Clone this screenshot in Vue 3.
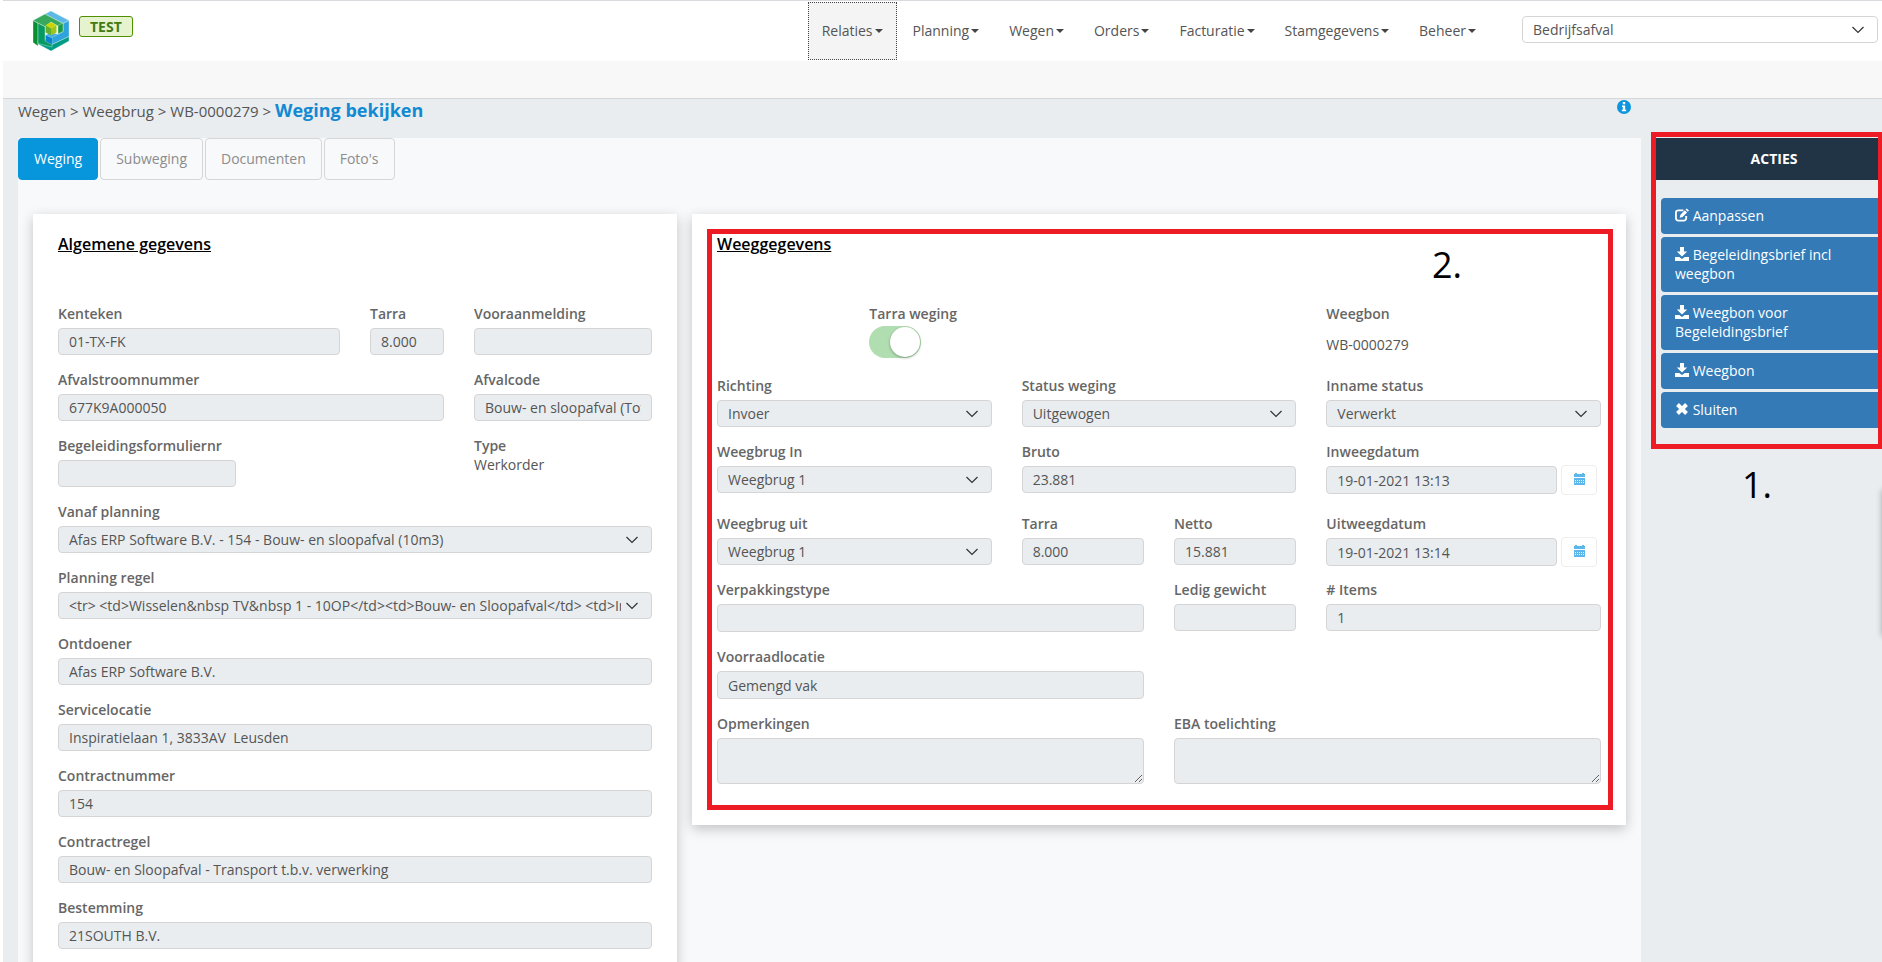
<script setup>
const nav = ['Relaties', 'Planning', 'Wegen', 'Orders', 'Facturatie', 'Stamgegevens', 'Beheer']
const tabs = ['Weging', 'Subweging', 'Documenten', "Foto's"]

const general = [
  [
    { id: 'kenteken', label: 'Kenteken', span: 6, value: '01-TX-FK' },
    { id: 'tarra', label: 'Tarra', span: 2, value: '8.000' },
    { id: 'vooraanmelding', label: 'Vooraanmelding', span: 4, value: '' },
  ],
  [
    { id: 'afvalstroom', label: 'Afvalstroomnummer', span: 8, value: '677K9A000050' },
    { id: 'afvalcode', label: 'Afvalcode', span: 4, value: 'Bouw- en sloopafval (Totaal)' },
  ],
  [
    { id: 'begeleiding', label: 'Begeleidingsformuliernr', span: 4, value: '' },
    { id: 'type', label: 'Type', span: 4, start: 9, kind: 'text', value: 'Werkorder' },
  ],
  [{ id: 'planning', label: 'Vanaf planning', span: 12, kind: 'select', value: 'Afas ERP Software B.V. - 154 - Bouw- en sloopafval (10m3)' }],
  [{ id: 'regel', label: 'Planning regel', span: 12, kind: 'select', value: '<tr> <td>Wisselen&nbsp TV&nbsp 1 - 10OP</td><td>Bouw- en Sloopafval</td> <td>Inzet</td></tr>' }],
  [{ id: 'ontdoener', label: 'Ontdoener', span: 12, value: 'Afas ERP Software B.V.' }],
  [{ id: 'locatie', label: 'Servicelocatie', span: 12, value: 'Inspiratielaan 1, 3833AV  Leusden' }],
  [{ id: 'contract', label: 'Contractnummer', span: 12, value: '154' }],
  [{ id: 'contractregel', label: 'Contractregel', span: 12, value: 'Bouw- en Sloopafval - Transport t.b.v. verwerking' }],
  [{ id: 'bestemming', label: 'Bestemming', span: 12, value: '21SOUTH B.V.' }],
]

const weighing = [
  { size: 'high', fields: [
    { id: 'tarraweging', label: 'Tarra weging', span: 4, start: 3, kind: 'toggle' },
    { id: 'weegbon', label: 'Weegbon', span: 4, start: 9, kind: 'text', low: true, value: 'WB-0000279' },
  ] },
  { size: 'base', fields: [
    { id: 'richting', label: 'Richting', span: 4, kind: 'select', value: 'Invoer' },
    { id: 'status', label: 'Status weging', span: 4, kind: 'select', value: 'Uitgewogen' },
    { id: 'inname', label: 'Inname status', span: 4, kind: 'select', value: 'Verwerkt' },
  ] },
  { size: 'high', fields: [
    { id: 'brugin', label: 'Weegbrug In', span: 4, kind: 'select', value: 'Weegbrug 1' },
    { id: 'bruto', label: 'Bruto', span: 4, value: '23.881' },
    { id: 'indatum', label: 'Inweegdatum', span: 4, kind: 'date', value: '19-01-2021 13:13' },
  ] },
  { size: 'base', fields: [
    { id: 'bruguit', label: 'Weegbrug uit', span: 4, kind: 'select', value: 'Weegbrug 1' },
    { id: 'tarra2', label: 'Tarra', span: 2, value: '8.000' },
    { id: 'netto', label: 'Netto', span: 2, value: '15.881' },
    { id: 'uitdatum', label: 'Uitweegdatum', span: 4, kind: 'date', value: '19-01-2021 13:14' },
  ] },
  { size: 'mid', fields: [
    { id: 'verpakking', label: 'Verpakkingstype', span: 6, tall: true, value: '' },
    { id: 'ledig', label: 'Ledig gewicht', span: 2, value: '' },
    { id: 'items', label: '# Items', span: 4, value: '1' },
  ] },
  { size: 'mid', fields: [
    { id: 'voorraad', label: 'Voorraadlocatie', span: 6, tall: true, value: 'Gemengd vak' },
  ] },
  { size: 'last', fields: [
    { id: 'opmerkingen', label: 'Opmerkingen', span: 6, kind: 'area' },
    { id: 'eba', label: 'EBA toelichting', span: 6, kind: 'area' },
  ] },
]

const cards = [
  { title: 'Algemene gegevens', name: 'general', rows: general.map((fields) => ({ size: 'base', fields })) },
  { title: 'Weeggegevens', name: 'weighing', rows: weighing },
]

const actions = [
  { icon: 'edit', text: 'Aanpassen' },
  { icon: 'download', text: 'Begeleidingsbrief incl weegbon' },
  { icon: 'download', text: 'Weegbon voor Begeleidingsbrief' },
  { icon: 'download', text: 'Weegbon' },
  { icon: 'close', text: 'Sluiten' },
]
</script>

<template>
  <div class="page">
    <header class="top">
      <svg class="logo" viewBox="0 0 36 40" aria-label="Logo">
        <g stroke="#d5efe2" stroke-width=".4" stroke-linejoin="round">
          <path fill="#5cb8e6" d="M12 3 18 0l18 9.500-6 3z" />
          <path fill="#2ea3dd" d="M36 9.500V25.500L19 33.500V26.500l11-6V12.500z" />
          <path fill="#0a8f30" d="M0 9.500 5 12v23L0 31.500z" />
          <path fill="#009c86" d="M19 33.500 36 25.500V30L18 40 5 33v-3.500l7-.5z" />
          <path fill="#069a62" d="M5 12l7 3.500V30l7 3.500V36L5 32.500z" />
          <path fill="#38a95c" d="M0 9.500 12 3l18 9.500v8L25 23v-8l-7-4-6 4.500L5 12z" />
          <path fill="#1b9c48" d="M25 14.500 30 12v8.500L25 23z" />
        </g>
        <path fill="#0b84cf" d="M12.500 24l6.500 3v6.500L12.500 30z" />
        <path fill="#46aee3" d="M12.500 24l5.500-2 7 1-6 4z" />
        <path fill="#c9d400" d="M12.500 14.200 18 11.200l5.500 3L18 17.200z" />
        <path fill="#62b02b" d="M12.500 14.200l5.500 3v7l-5.500-2.700z" />
        <path fill="#a0c517" d="M23.500 14.200 18 17.200v7l5.500-2.700z" />
      </svg>
      <span class="env">TEST</span>
      <nav class="nav">
        <a v-for="(item, i) in nav" :key="item" href="#" :class="{ focus: i === 0 }">{{ item }}<i class="caret"></i></a>
      </nav>
      <span class="select-wrap company">
        <select class="control" aria-label="Bedrijf"><option>Bedrijfsafval</option></select>
        <svg class="chevron" viewBox="0 0 12 8"><path d="M.5 1 6 6.500 11.500 1" /></svg>
      </span>
    </header>
    <div class="subbar"></div>

    <div class="crumbs">
      <p><a href="#">Wegen</a> &gt; <a href="#">Weegbrug</a> &gt; <a href="#">WB-0000279</a> &gt; <strong>Weging bekijken</strong></p>
      <button class="info" type="button" aria-label="Informatie">
        <svg viewBox="0 0 14 14"><circle cx="7" cy="7" r="7" fill="#0d95de" /><path fill="#fff" d="M5.800 2h2.400v2.200H5.800zM5 5.500h3.200v4.300H9.200v1.500H4.800V9.800h1V7H5z" /></svg>
      </button>
    </div>

    <div class="layout">
      <main class="content">
        <div class="tabs">
          <button v-for="(tab, i) in tabs" :key="tab" type="button" :class="{ active: i === 0 }">{{ tab }}</button>
        </div>
        <div class="cards">
          <section v-for="card in cards" :key="card.name" class="card" :class="card.name">
            <h2>{{ card.title }}</h2>
            <div v-for="(row, r) in card.rows" :key="r" class="row" :class="row.size">
              <div v-for="f in row.fields" :key="f.id" class="field" :class="['span-' + f.span, f.start ? 'start-' + f.start : '']">
                <label v-if="f.kind !== 'text'" :for="f.id">{{ f.label }}</label>
                <span v-else class="label">{{ f.label }}</span>

                <span v-if="f.kind === 'text'" class="plain" :class="{ low: f.low }">{{ f.value }}</span>
                <input v-else-if="f.kind === 'toggle'" :id="f.id" class="toggle" type="checkbox" role="switch" checked disabled />
                <span v-else-if="f.kind === 'select'" class="select-wrap">
                  <select :id="f.id" class="control" disabled><option>{{ f.value }}</option></select>
                  <svg class="chevron" viewBox="0 0 12 8"><path d="M.5 1 6 6.500 11.500 1" /></svg>
                </span>
                <span v-else-if="f.kind === 'date'" class="date">
                  <input :id="f.id" class="control tall" type="text" :value="f.value" disabled />
                  <button type="button" aria-label="Kies datum">
                    <svg viewBox="0 0 11 12"><path fill="#5cb8ec" d="M1 0h2v1h5V0h2v1h1v3H0V1h1zM0 5h11v7H0z" /><path stroke="#fff" stroke-dasharray="1 1" d="M1 7.500h9M1 9.500h9" /></svg>
                  </button>
                </span>
                <textarea v-else-if="f.kind === 'area'" :id="f.id" class="control area" disabled></textarea>
                <input v-else :id="f.id" class="control" :class="{ tall: f.tall }" type="text" :value="f.value" disabled />
              </div>
            </div>
            <template v-if="card.name === 'weighing'">
              <div class="marker"></div>
              <span class="number">2.</span>
            </template>
          </section>
        </div>
      </main>

      <aside class="side">
        <h3>ACTIES</h3>
        <div class="actions">
          <button v-for="a in actions" :key="a.text" type="button">
            <svg v-if="a.icon === 'edit'" viewBox="0 0 15 14"><path fill="none" stroke="#fff" stroke-width="2" d="M9 2H3.500A2.500 2.500 0 0 0 1 4.500v6A2.500 2.500 0 0 0 3.500 13h6a2.500 2.500 0 0 0 2.500-2.500V8" /><path fill="#fff" d="M5 10l.8-3.200L10.500 2l2.400 2.400L8.200 9.200zM11.300 1.200 12.500 0 15 2.300l-1.200 1.200z" /></svg>
            <svg v-else-if="a.icon === 'download'" viewBox="0 0 14 14"><path fill="#fff" d="M5 0h4v4.500h3.200L7 9.500l-5.200-5H5zM0 10h4.200L7 12l2.800-2H14v4H0z" /></svg>
            <svg v-else viewBox="0 0 14 14"><path fill="none" stroke="#fff" stroke-width="4" d="M2.500 2.500l9 9M11.500 2.500l-9 9" /></svg>
            {{ a.text }}
          </button>
        </div>
        <div class="marker"></div>
        <span class="number">1.</span>
        <div class="drawer"></div>
      </aside>
    </div>
  </div>
</template>

<style>
body {
  background: #fff;
}
</style>

<style scoped>
* {
  box-sizing: border-box;
}
.page {
  display: flex;
  flex-direction: column;
  height: 100vh;
  margin-left: 3px;
  overflow: hidden;
  background: #e9edf0;
  color: #555;
  font: 14px/20px "Open Sans", "Noto Sans", sans-serif;
}
button,
input,
select,
textarea {
  margin: 0;
  font: inherit;
  color: inherit;
}
a {
  color: inherit;
  text-decoration: none;
}
.top {
  flex: none;
  display: flex;
  align-items: flex-start;
  height: 61px;
  padding: 0 4px 0 30px;
  border-top: 1px solid #dadade;
  background: #fff;
}
.logo {
  width: 36px;
  height: 40px;
  margin-top: 10px;
}
.env {
  margin: 15px 0 0 10px;
  padding: 0 10px;
  border: 1px solid #4f9000;
  border-radius: 3px;
  background: #e5f4cf;
  color: #437a12;
  line-height: 19px;
  font-weight: 700;
}
.nav {
  display: flex;
  gap: 2px;
  margin: 1px 32px 0 auto;
}
.nav a {
  display: flex;
  align-items: center;
  height: 58px;
  padding: 0 13px;
  border: 1px solid transparent;
}
.nav a.focus {
  border: 1px dotted #444;
  background: #f4f4f4;
}
.caret {
  margin-left: 2px;
  border: 4px solid transparent;
  border-top-color: #444;
  border-bottom: 0;
}
.company {
  width: 356px;
  margin-top: 15px;
}
.subbar {
  flex: none;
  height: 38px;
  border-bottom: 1px solid #d4d7d9;
  background: #f8f8f8;
}
.crumbs {
  flex: none;
  display: flex;
  justify-content: space-between;
  height: 39px;
  padding: 0 251px 0 15px;
}
.crumbs p {
  margin: 0;
  font-size: 15px;
  line-height: 22px;
}
.crumbs strong {
  color: #1389d2;
  font-size: 18px;
}
.info {
  width: 14px;
  height: 14px;
  margin-top: 1px;
  padding: 0;
  border: 0;
  background: none;
}
.info svg {
  display: block;
}
.layout {
  flex: 1;
  display: flex;
  min-height: 0;
}
.content {
  flex: 1;
  min-width: 0;
  margin-left: 15px;
  background: #f8f9fb;
}
.tabs {
  display: flex;
  gap: 2px;
}
.tabs button {
  height: 42px;
  padding: 0 15px;
  border: 1px solid #d6d6d6;
  border-radius: 4px;
  background: #f8f9fb;
  color: #8c8c8c;
}
.tabs .active {
  border-color: #0795dc;
  background: #0795dc;
  color: #fff;
  font-weight: 500;
}
.cards {
  display: grid;
  grid-template-columns: minmax(0, 644fr) minmax(0, 934fr);
  align-items: start;
  gap: 15px;
  padding: 34px 15px 15px;
}
.card {
  position: relative;
  padding: 18px 25px 41px;
  background: #fff;
  box-shadow: 0 4px 12px rgba(0, 0, 0, 0.22);
}
h2 {
  margin: 0 0 48px;
  color: #000;
  font-size: 16px;
  line-height: 24px;
  font-weight: 600;
  text-decoration: underline;
}
.row {
  display: grid;
  grid-template-columns: repeat(12, minmax(0, 1fr));
  column-gap: 30px;
  align-content: start;
}
.base {
  min-height: 66px;
}
.mid {
  min-height: 67px;
}
.high {
  min-height: 72px;
}
.field {
  display: flex;
  flex-direction: column;
  min-width: 0;
}
.field label,
.label {
  color: #666;
  font-weight: 600;
}
.span-2 {
  grid-column-end: span 2;
}
.span-4 {
  grid-column-end: span 4;
}
.span-6 {
  grid-column-end: span 6;
}
.span-8 {
  grid-column-end: span 8;
}
.span-12 {
  grid-column-end: span 12;
}
.start-3 {
  grid-column-start: 3;
}
.start-9 {
  grid-column-start: 9;
}
.control {
  display: block;
  width: 100%;
  height: 27px;
  margin-top: 4px;
  padding: 0 10px;
  border: 1px solid #d5d5d5;
  border-radius: 4px;
  background: #e9edf0;
  color: #555;
  opacity: 1;
  appearance: none;
}
.tall {
  height: 28px;
}
.area {
  height: 46px;
  resize: vertical;
}
.select-wrap {
  position: relative;
  display: block;
}
.select-wrap .control {
  padding-right: 30px;
}
.company .control {
  margin-top: 0;
  background: #fff;
}
.chevron {
  position: absolute;
  right: 14px;
  bottom: 9px;
  width: 12px;
  height: 8px;
  fill: none;
  stroke: #333;
  stroke-width: 1.2;
  pointer-events: none;
}
.date {
  display: flex;
  align-items: center;
  gap: 4px;
  margin-top: 3px;
  padding-right: 4px;
}
.date .control {
  flex: 1;
  min-width: 0;
  margin-top: 0;
}
.date button {
  display: flex;
  align-items: center;
  justify-content: center;
  width: 36px;
  height: 30px;
  padding: 0 0 2px;
  border: 1px solid #eee;
  border-radius: 4px;
  background: #fff;
}
.date svg {
  width: 11px;
  height: 12px;
}
.plain {
  line-height: 18px;
}
.low {
  margin-top: 12px;
}
.toggle {
  width: 52px;
  height: 32px;
  margin-top: 2px;
  border-radius: 16px;
  background: #b1deb1;
  appearance: none;
}
.toggle::before {
  content: "";
  display: block;
  width: 30px;
  height: 30px;
  margin: 1px 1px 1px 21px;
  border-radius: 50%;
  background: #fff;
  box-shadow: 0 1px 3px rgba(0, 0, 0, 0.3);
}
.side {
  position: relative;
  flex: none;
  width: 226px;
  margin-left: 15px;
}
h3 {
  margin: 0;
  padding-left: 10px;
  background: #213446;
  color: #fff;
  font-size: 14px;
  line-height: 42px;
  font-weight: 700;
  text-align: center;
}
.actions {
  display: flex;
  flex-direction: column;
  gap: 3px;
  padding: 18px 0 0 5px;
}
.actions button {
  padding: 8px 14px 9px;
  border: 0;
  border-radius: 4px 0 0 4px;
  background: #337ab7;
  color: #fff;
  line-height: 19px;
  text-align: left;
}
.actions svg {
  width: 14px;
  height: 14px;
  vertical-align: -1px;
}
.marker {
  position: absolute;
  inset: 15px 13px 15px 15px;
  border: 5px solid #ed1c24;
  pointer-events: none;
}
.number {
  position: absolute;
  color: #000;
  font-size: 36px;
  line-height: 40px;
}
.weighing .number {
  top: 31px;
  right: 164px;
}
.side .marker {
  inset: -6px -1px auto -5px;
  height: 317px;
}
.side .number {
  top: 327px;
  right: 110px;
}
.drawer {
  position: absolute;
  top: 352px;
  left: 100%;
  width: 40px;
  height: 146px;
  box-shadow: 0 0 6px rgba(0, 0, 0, 0.3);
}
</style>
